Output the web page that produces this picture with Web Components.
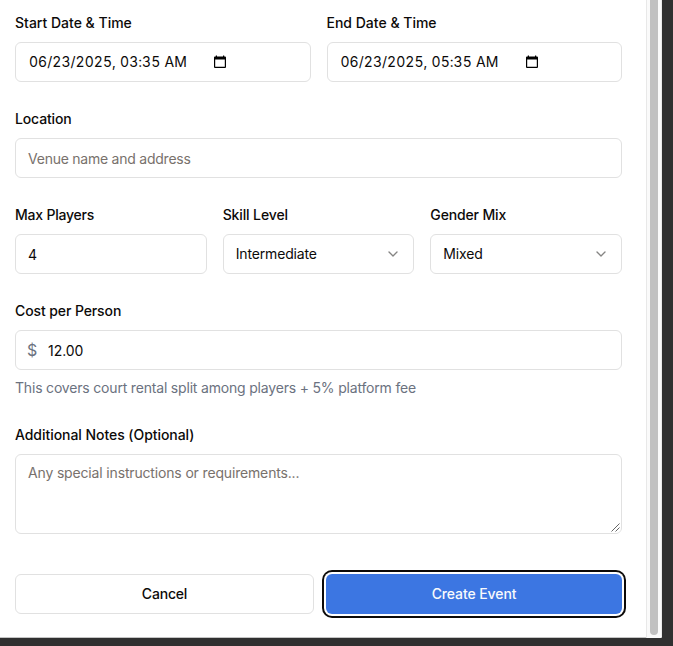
<!DOCTYPE html>
<html lang="en">
<head>
<meta charset="utf-8">
<title>Create Event</title>
<style>
html,body{margin:0;height:100%;overflow:hidden;background:#303030}
body{font:14px/20px Inter,"Liberation Sans",sans-serif;color:#0c0a09}
</style>
</head>
<body>
<event-dialog>
  <field-row style="--cols:1fr 1fr">
    <form-field label="Start Date &amp; Time"><date-box>06/23/2025, 03:35 AM</date-box></form-field>
    <form-field label="End Date &amp; Time"><date-box>06/23/2025, 05:35 AM</date-box></form-field>
  </field-row>
  <form-field label="Location" style="--track:-.14px"><text-box muted>Venue name and address</text-box></form-field>
  <field-row style="--cols:1fr 1fr 1fr">
    <form-field label="Max Players" style="--track:-.22px"><text-box>4</text-box></form-field>
    <form-field label="Skill Level" style="--track:-.12px"><select-box>Intermediate</select-box></form-field>
    <form-field label="Gender Mix" style="--track:-.15px"><select-box>Mixed</select-box></form-field>
  </field-row>
  <form-field label="Cost per Person" style="--track:-.1px" help="This covers court rental split among players + 5% platform fee"><text-box prefix="$">12.00</text-box></form-field>
  <form-field label="Additional Notes (Optional)" style="--track:-.05px"><notes-box>Any special instructions or requirements...</notes-box></form-field>
  <action-bar><action-button>Cancel</action-button><action-button primary>Create Event</action-button></action-bar>
</event-dialog>
<script>
const box = 'box-sizing:border-box;border:1px solid #e1e1e1;border-radius:6px;background:#fff;';
function define(name, render) {
  customElements.define(name, class extends HTMLElement {
    constructor() { super(); this.attachShadow({ mode: 'open' }); }
    connectedCallback() { this.shadowRoot.innerHTML = render(this); }
  });
}
define('event-dialog', () => `<style>
  :host{display:grid;grid-template-columns:646px 16px;width:662px;height:638px;background:#fff;border-bottom-right-radius:2px;overflow:hidden}
  main{box-sizing:border-box;padding:10px 24px 0 15px;display:flex;flex-direction:column;gap:24px;border-bottom:1px solid #c4c4c4}
  aside{box-sizing:border-box;border-left:1px solid #e8e8e8;border-right:1px solid #e9e9e9;background:#fafafa;padding:0 3px 3px;display:flex}
  i{flex:1;background:#c1c1c1;border-radius:0 0 4px 4px}
</style><main><slot></slot></main><aside><i></i></aside>`);
define('field-row', () => `<style>:host{display:grid;grid-template-columns:var(--cols);gap:16px}</style><slot></slot>`);
define('form-field', el => `<style>
  :host{display:flex;flex-direction:column;gap:8px;min-width:0}
  label{font-weight:500;line-height:24px;height:24px;white-space:nowrap;padding-top:1px;box-sizing:border-box;letter-spacing:var(--track,0)}
  p{margin:0;color:#6b7280;letter-spacing:-.185px}
</style><label>${el.getAttribute('label').replace('&', '&amp;')}</label><slot></slot>${el.hasAttribute('help') ? `<p>${el.getAttribute('help')}</p>` : ''}`);
define('text-box', el => `<style>
  :host{display:flex;align-items:center;height:40px;padding:1px 12px 0;letter-spacing:-.05px;${box}}
  :host([muted]){color:#78716c;letter-spacing:-.24px}
  b{font-weight:400;font-size:16px;color:#6b7280;width:21px;margin:-2px 0 0 -1px}
</style>${el.hasAttribute('prefix') ? `<b>${el.getAttribute('prefix')}</b>` : ''}<span><slot></slot></span>`);
define('date-box', () => `<style>
  :host{display:flex;align-items:center;height:40px;padding:0 13px;${box}}
  span{width:183px;font-variant-numeric:tabular-nums;letter-spacing:.03px;word-spacing:.5px}
</style><span><slot></slot></span><svg width="16" height="16" viewBox="0 0 16 16"><path fill="#000" fill-rule="evenodd" d="M3.8 1.5h1.2v1h6v-1h1.2v1h.8q1 0 1 1v9.5q0 1-1 1H3q-1 0-1-1V3.5q0-1 1-1h.8zM3.2 5.5v7.3h9.6V5.5z"/></svg>`);
define('select-box', () => `<style>
  :host{display:flex;align-items:center;justify-content:space-between;height:40px;padding:0 12px;letter-spacing:-.15px;${box}}
</style><span><slot></slot></span><svg width="16" height="16" viewBox="0 0 24 24" fill="none" stroke="#858483" stroke-width="2" stroke-linecap="round" stroke-linejoin="round"><path d="m6 9 6 6 6-6"/></svg>`);
define('notes-box', () => `<style>
  :host{display:flex;justify-content:space-between;height:80px;padding:8px 1px 1px 12px;color:#78716c;letter-spacing:-.16px;${box}}
  svg{align-self:flex-end}
</style><span><slot></slot></span><svg width="9" height="9" viewBox="0 0 9 9" fill="none" stroke="#666" stroke-width="1"><path d="M.5 8.5l8-8M4.5 8.5l4-4"/></svg>`);
define('action-bar', () => `<style>:host{display:grid;grid-template-columns:299px 296px;gap:12px;margin-top:16px}</style><slot></slot>`);
define('action-button', () => `<style>
  :host{display:flex;align-items:center;justify-content:center;height:40px;font-weight:500;letter-spacing:-.2px;${box}}
  :host([primary]){border:0;background:#3c76e2;color:#f8fafc;letter-spacing:-.1px;box-shadow:0 0 0 2px #fff,0 0 0 4px #0c0a09}
</style><span><slot></slot></span>`);
</script>
</body>
</html>
